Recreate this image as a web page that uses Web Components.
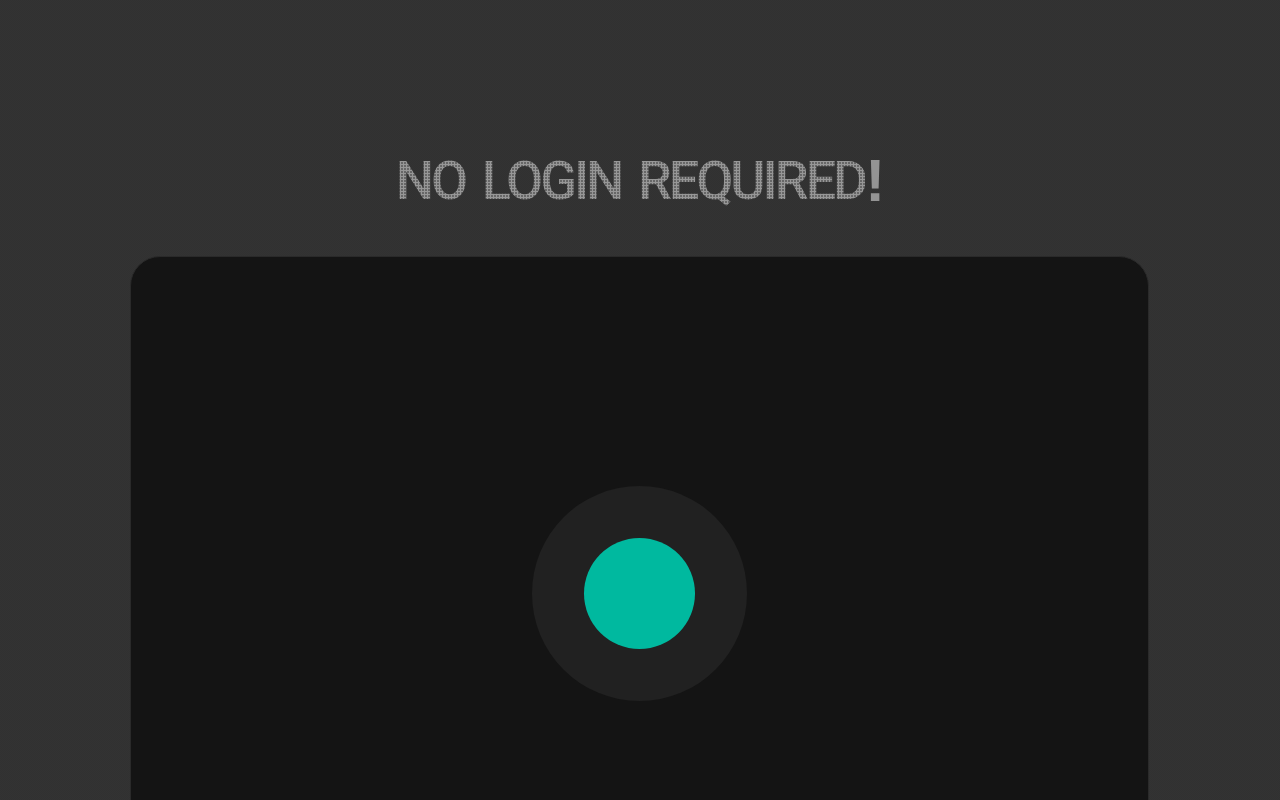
<!DOCTYPE html>
<html><head><meta charset="utf-8"><style>
html,body{margin:0;height:100%;overflow:hidden;background:#333}
</style></head><body>
<app-page>
<dot-title><span>NO LOGIN REQUIRED</span><b slot="mark">!</b></dot-title>
<demo-panel><record-button></record-button></demo-panel>
</app-page>
<script>
class AppPage extends HTMLElement{constructor(){super();this.attachShadow({mode:'open'}).innerHTML=`<style>
:host{display:flex;flex-direction:column;align-items:center;height:800px;overflow:hidden;box-sizing:border-box;padding-top:148px;
background-color:#323232;background-image:conic-gradient(#333 25%,#313131 0 50%,#333 0 75%,#313131 0);background-size:2px 2px}
</style><slot></slot>`}}
class DotTitle extends HTMLElement{constructor(){super();this.attachShadow({mode:'open'}).innerHTML=`<style>
:host{display:flex;flex:none;align-items:flex-start;height:108px;margin-left:1px}
.t{display:inline-block;font:500 54px/66px Roboto,sans-serif;letter-spacing:-3.1px;word-spacing:6.3px;white-space:nowrap;color:transparent;
background-image:radial-gradient(circle at 1.5px 1.5px,#979797 0,#979797 1.15px,#585858 1.5px);background-size:3px 3px;-webkit-background-clip:text;background-clip:text}
.m{color:#949494;font:700 60px/66px "Liberation Sans",sans-serif}
</style><span class="t"><slot></slot></span><span class="m"><slot name="mark"></slot></span>`}}
class DemoPanel extends HTMLElement{constructor(){super();this.attachShadow({mode:'open'}).innerHTML=`<style>
:host{display:flex;flex:none;justify-content:center;align-items:flex-start;box-sizing:border-box;width:1019px;height:600px;background:#141414;border:1px solid #2a2a2a;border-radius:30px;padding-top:229px;margin-left:-1px}
</style><slot></slot>`}}
class RecordButton extends HTMLElement{constructor(){super();this.attachShadow({mode:'open'}).innerHTML=`<style>
:host{display:flex;align-items:center;justify-content:center;width:215px;height:215px;border-radius:50%;background:#212121}
i{display:block;width:111px;height:111px;border-radius:50%;background:#00b99f}
</style><i></i>`}}
customElements.define('app-page',AppPage);customElements.define('dot-title',DotTitle);customElements.define('demo-panel',DemoPanel);customElements.define('record-button',RecordButton);
</script></body></html>
